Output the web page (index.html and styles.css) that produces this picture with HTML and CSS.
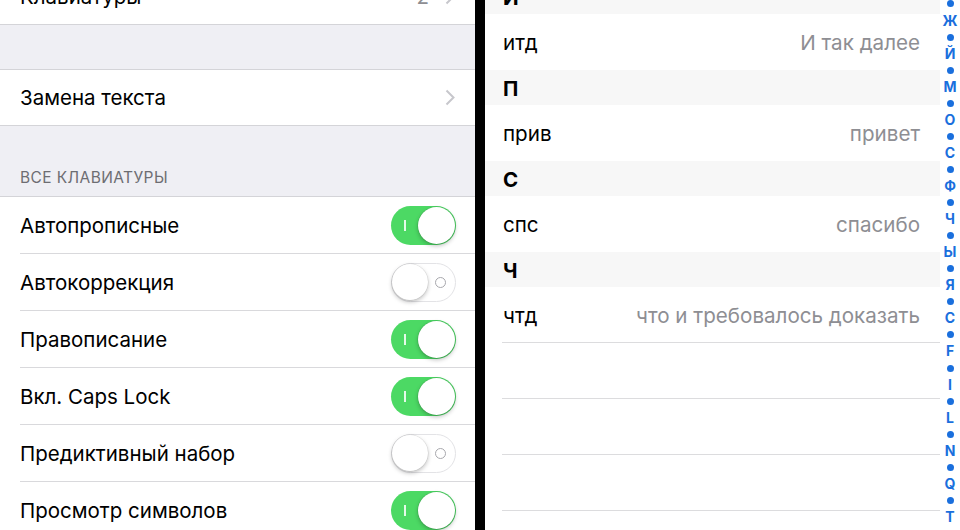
FILE: index.html
```html
<!DOCTYPE html>
<html lang="ru">
<head>
<meta charset="utf-8">
<link rel="stylesheet" href="styles.css">
</head>
<body>
<div class="screen">
  <section class="left">
    <div class="group group-top">
      <div class="row last">
        <span class="label">Клавиатуры</span>
        <span class="value">2</span>
        <svg class="chev" viewBox="0 0 10 17" width="10" height="17"><path d="M1.5 1.5 L8.5 8.5 L1.5 15.5" fill="none" stroke="#c7c7cc" stroke-width="2"/></svg>
      </div>
    </div>
    <div class="gap"></div>
    <div class="group">
      <div class="row last">
        <span class="label">Замена текста</span>
        <svg class="chev" viewBox="0 0 10 17" width="10" height="17"><path d="M1.5 1.5 L8.5 8.5 L1.5 15.5" fill="none" stroke="#c7c7cc" stroke-width="2"/></svg>
      </div>
    </div>
    <div class="section-head">ВСЕ КЛАВИАТУРЫ</div>
    <div class="group">
      <div class="row"><span class="label">Автопрописные</span><span class="toggle on"><span class="mark"></span><span class="knob"></span></span></div>
      <div class="row"><span class="label">Автокоррекция</span><span class="toggle off"><span class="knob"></span><span class="ring"></span></span></div>
      <div class="row"><span class="label">Правописание</span><span class="toggle on"><span class="mark"></span><span class="knob"></span></span></div>
      <div class="row"><span class="label">Вкл. Caps Lock</span><span class="toggle on"><span class="mark"></span><span class="knob"></span></span></div>
      <div class="row"><span class="label">Предиктивный набор</span><span class="toggle off"><span class="knob"></span><span class="ring"></span></span></div>
      <div class="row"><span class="label">Просмотр символов</span><span class="toggle on"><span class="mark"></span><span class="knob"></span></span></div>
    </div>
  </section>
  <div class="divider"></div>
  <section class="right">
    <div class="list">
      <div class="head first">И</div>
      <div class="item"><span class="short">итд</span><span class="phrase">И так далее</span></div>
      <div class="head">П</div>
      <div class="item"><span class="short">прив</span><span class="phrase">привет</span></div>
      <div class="head">С</div>
      <div class="item"><span class="short">спс</span><span class="phrase">спасибо</span></div>
      <div class="head">Ч</div>
      <div class="item sep"><span class="short">чтд</span><span class="phrase">что и требовалось доказать</span></div>
      <div class="item sep"></div>
      <div class="item sep"></div>
      <div class="item sep"></div>
    </div>
    <nav class="index">
      <span class="dot"></span><span class="ch">Ж</span>
      <span class="dot"></span><span class="ch">Й</span>
      <span class="dot"></span><span class="ch">М</span>
      <span class="dot"></span><span class="ch">О</span>
      <span class="dot"></span><span class="ch">С</span>
      <span class="dot"></span><span class="ch">Ф</span>
      <span class="dot"></span><span class="ch">Ч</span>
      <span class="dot"></span><span class="ch">Ы</span>
      <span class="dot"></span><span class="ch">Я</span>
      <span class="dot"></span><span class="ch">C</span>
      <span class="dot"></span><span class="ch">F</span>
      <span class="dot"></span><span class="ch">I</span>
      <span class="dot"></span><span class="ch">L</span>
      <span class="dot"></span><span class="ch">N</span>
      <span class="dot"></span><span class="ch">Q</span>
      <span class="dot"></span><span class="ch">T</span>
    </nav>
  </section>
</div>
</body>
</html>
```

FILE: styles.css
```css
* { box-sizing: border-box; }
html, body {
  margin: 0;
  padding: 0;
  width: 960px;
  height: 530px;
  overflow: hidden;
  background: #000;
  font-family: Inter, "Noto Sans", "Liberation Sans", sans-serif;
  -webkit-font-smoothing: antialiased;
}
.screen {
  display: flex;
  height: 530px;
}
.left {
  width: 475px;
  flex: none;
  background: #efeff4;
  overflow: hidden;
}
.group {
  background: #fff;
  border-top: 1px solid #d4d4d8;
  border-bottom: 1px solid #d4d4d8;
}
.group-top {
  margin-top: -31px;
  border-top: none;
}
.gap { height: 44px; }
.row {
  margin-left: 20px;
  height: 57px;
  border-bottom: 1px solid #d9d9dc;
  display: flex;
  align-items: center;
  padding-right: 19px;
  color: #000;
  font-size: 20.5px;
}
.row.last { height: 55px; border-bottom: none; }
.label { flex: 1; letter-spacing: 0; }
.value { color: #8e8e93; margin-right: 16px; }
.chev { margin-right: 1px; }
.section-head {
  height: 70px;
  display: flex;
  align-items: flex-end;
  padding: 0 0 9px 20px;
  font-size: 15.5px;
  color: #6d6d72;
  letter-spacing: 0.4px;
}
.toggle {
  width: 65px;
  height: 39px;
  border-radius: 20px;
  display: flex;
  align-items: center;
  justify-content: space-between;
  flex: none;
}
.toggle.on {
  background: #4cd964;
  padding: 1px 1px 1px 13px;
}
.toggle.off {
  background: #fff;
  border: 1.5px solid #e3e3e6;
  padding: 0 9px 0 0;
}
.knob {
  width: 37px;
  height: 37px;
  border-radius: 50%;
  background: #fff;
  box-shadow: 0 2px 4px rgba(0,0,0,0.25), 0 0 0 0.5px rgba(0,0,0,0.12);
}
.toggle.off .knob { width: 36px; height: 36px; }
.mark {
  width: 1.5px;
  height: 11px;
  background: rgba(255,255,255,0.85);
}
.ring {
  width: 11px;
  height: 11px;
  border-radius: 50%;
  border: 1.3px solid #a8a8ad;
}
.divider {
  width: 10px;
  flex: none;
  background: #000;
}
.right {
  flex: 1;
  background: #fff;
  display: flex;
  overflow: hidden;
}
.list {
  flex: 1;
}
.head {
  height: 35px;
  background: #f7f7f7;
  padding-left: 18px;
  display: flex;
  align-items: center;
  padding-top: 2px;
  font-weight: 700;
  font-size: 20.5px;
  color: #000;
}
.head.first { margin-top: -21px; }
.item {
  height: 56px;
  display: flex;
  align-items: center;
  justify-content: space-between;
  padding: 1px 20px 0 18px;
  font-size: 20.6px;
}
.item.sep {
  margin-left: 17px;
  padding-left: 1px;
  height: 56px;
  border-bottom: 1px solid #dcdcde;
}
.short { color: #000; }
.phrase { color: #8e8e93; }
.index {
  width: 20px;
  flex: none;
  display: flex;
  flex-direction: column;
  align-items: center;
  margin-top: -4.3px;
  color: #1a6fdd;
}
.index .dot,
.index .ch {
  height: 16.55px;
  flex: none;
  display: flex;
  align-items: center;
  justify-content: center;
}
.index .dot::before {
  content: "";
  width: 7px;
  height: 7px;
  border-radius: 50%;
  background: #1a6fdd;
}
.index .ch {
  font-size: 14px;
  font-weight: 700;
  line-height: 1;
}
```
